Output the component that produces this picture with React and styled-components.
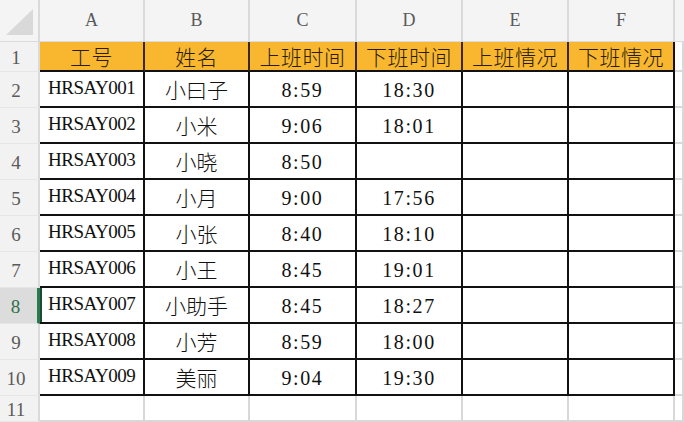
import React from "react";
import styled, { createGlobalStyle, css } from "styled-components";

const GlobalStyle = createGlobalStyle`
  html, body {
    margin: 0;
    padding: 0;
    background: #fff;
    overflow: hidden;
  }
`;

const columns = ["A", "B", "C", "D", "E", "F"];

const records = [
  ["HRSAY001", "小曰子", "8:59", "18:30"],
  ["HRSAY002", "小米", "9:06", "18:01"],
  ["HRSAY003", "小晓", "8:50", ""],
  ["HRSAY004", "小月", "9:00", "17:56"],
  ["HRSAY005", "小张", "8:40", "18:10"],
  ["HRSAY006", "小王", "8:45", "19:01"],
  ["HRSAY007", "小助手", "8:45", "18:27"],
  ["HRSAY008", "小芳", "8:59", "18:00"],
  ["HRSAY009", "美丽", "9:04", "19:30"],
];

const titles = ["工号", "姓名", "上班时间", "下班时间", "上班情况", "下班情况"];

const App = () => {
  return (
    <>
      <GlobalStyle />
      <Sheet>
        <Corner>
          <CornerMark />
        </Corner>
        {columns.map((c) => (
          <ColHead key={c}>{c}</ColHead>
        ))}
        <ColHead $last />

        <RowHead>1</RowHead>
        {titles.map((t, i) => (
          <TitleCell key={t} $last={i === titles.length - 1}>
            {t}
          </TitleCell>
        ))}
        <Cell />

        {records.map((r, idx) => {
          const rowNo = idx + 2;
          const selected = rowNo === 8;
          return (
            <React.Fragment key={r[0]}>
              <RowHead $selected={selected}>{rowNo}</RowHead>
              <DataCell $kind="id" $active={selected}>
                {r[0]}
              </DataCell>
              <DataCell $kind="name">{r[1]}</DataCell>
              <DataCell $kind="time">{r[2]}</DataCell>
              <DataCell $kind="time">{r[3]}</DataCell>
              <DataCell />
              <DataCell $last />
              <Cell />
            </React.Fragment>
          );
        })}

        <RowHead>11</RowHead>
        {columns.map((c) => (
          <Cell key={c} />
        ))}
        <Cell />
      </Sheet>
    </>
  );
};

const Sheet = styled.div`
  display: grid;
  grid-template-columns: 40px 105px 105px 107px 106px 106px 106px 1fr;
  grid-template-rows: 42px 30px repeat(9, 36px) 1fr;
  width: 684px;
  height: 422px;
  overflow: hidden;
  font-family: "Liberation Serif", "Noto Sans CJK SC", serif;
  color: #111;
`;

const headBase = css`
  box-sizing: border-box;
  background: #f2f2f2;
  border-right: 2px solid #dadada;
  border-bottom: 1px solid #dadada;
  color: #5a5a5a;
  display: flex;
  justify-content: center;
`;

const Corner = styled.div`
  ${headBase};
  position: relative;
  background: #f4f4f4;
`;

const CornerMark = styled.div`
  position: absolute;
  right: 5px;
  bottom: 6px;
  width: 0;
  height: 0;
  border-left: 27px solid transparent;
  border-bottom: 26px solid #d9d9d9;
`;

const ColHead = styled.div`
  ${headBase};
  border-right-width: ${(p) => (p.$last ? "0" : "2px")};
  align-items: flex-end;
  padding-bottom: 10px;
  font-size: 18px;
  background: #f4f4f4;
`;

const RowHead = styled.div`
  ${headBase};
  align-items: center;
  padding-right: 6px;
  padding-top: 3px;
  font-size: 19px;
  border-bottom: 1px solid #e6e6e6;
  ${(p) =>
    p.$selected &&
    css`
      background: #dcdcdc;
      color: #2f6e4c;
      border-right: 3px solid #2a7a50;
    `}
`;

const Cell = styled.div`
  box-sizing: border-box;
  border-right: 2px solid #d8d8d8;
  border-bottom: 2px solid #d8d8d8;
  background: #fff;
`;

const TitleCell = styled.div`
  box-sizing: border-box;
  background: #f9b730;
  border-right: 2px solid ${(p) => (p.$last ? "#1a1208" : "#3a2810")};
  border-bottom: 2px solid #111;
  display: flex;
  align-items: center;
  justify-content: center;
  font-family: "Noto Sans CJK SC", sans-serif;
  font-weight: 300;
  font-size: 21px;
  color: #2a1d05;
  line-height: 1;
  letter-spacing: 0.5px;
`;

const kinds = {
  id: css`
    justify-content: flex-start;
    padding-left: 8px;
    padding-bottom: 4px;
    font-size: 19px;
    letter-spacing: -0.5px;
  `,
  name: css`
    justify-content: center;
    font-family: "Noto Sans CJK SC", sans-serif;
    font-weight: 300;
    font-size: 21px;
  `,
  time: css`
    justify-content: center;
    font-size: 20px;
    letter-spacing: 1.6px;
    padding-top: 2px;
  `,
};

const DataCell = styled.div`
  box-sizing: border-box;
  border-right: 2px solid #111;
  border-bottom: 2px solid #111;
  background: #fff;
  display: flex;
  align-items: center;
  line-height: 1;
  ${(p) => p.$kind && kinds[p.$kind]};
  ${(p) =>
    p.$active &&
    css`
      box-shadow: inset 2px 0 0 #1d4a33;
    `}
`;

export default App;
